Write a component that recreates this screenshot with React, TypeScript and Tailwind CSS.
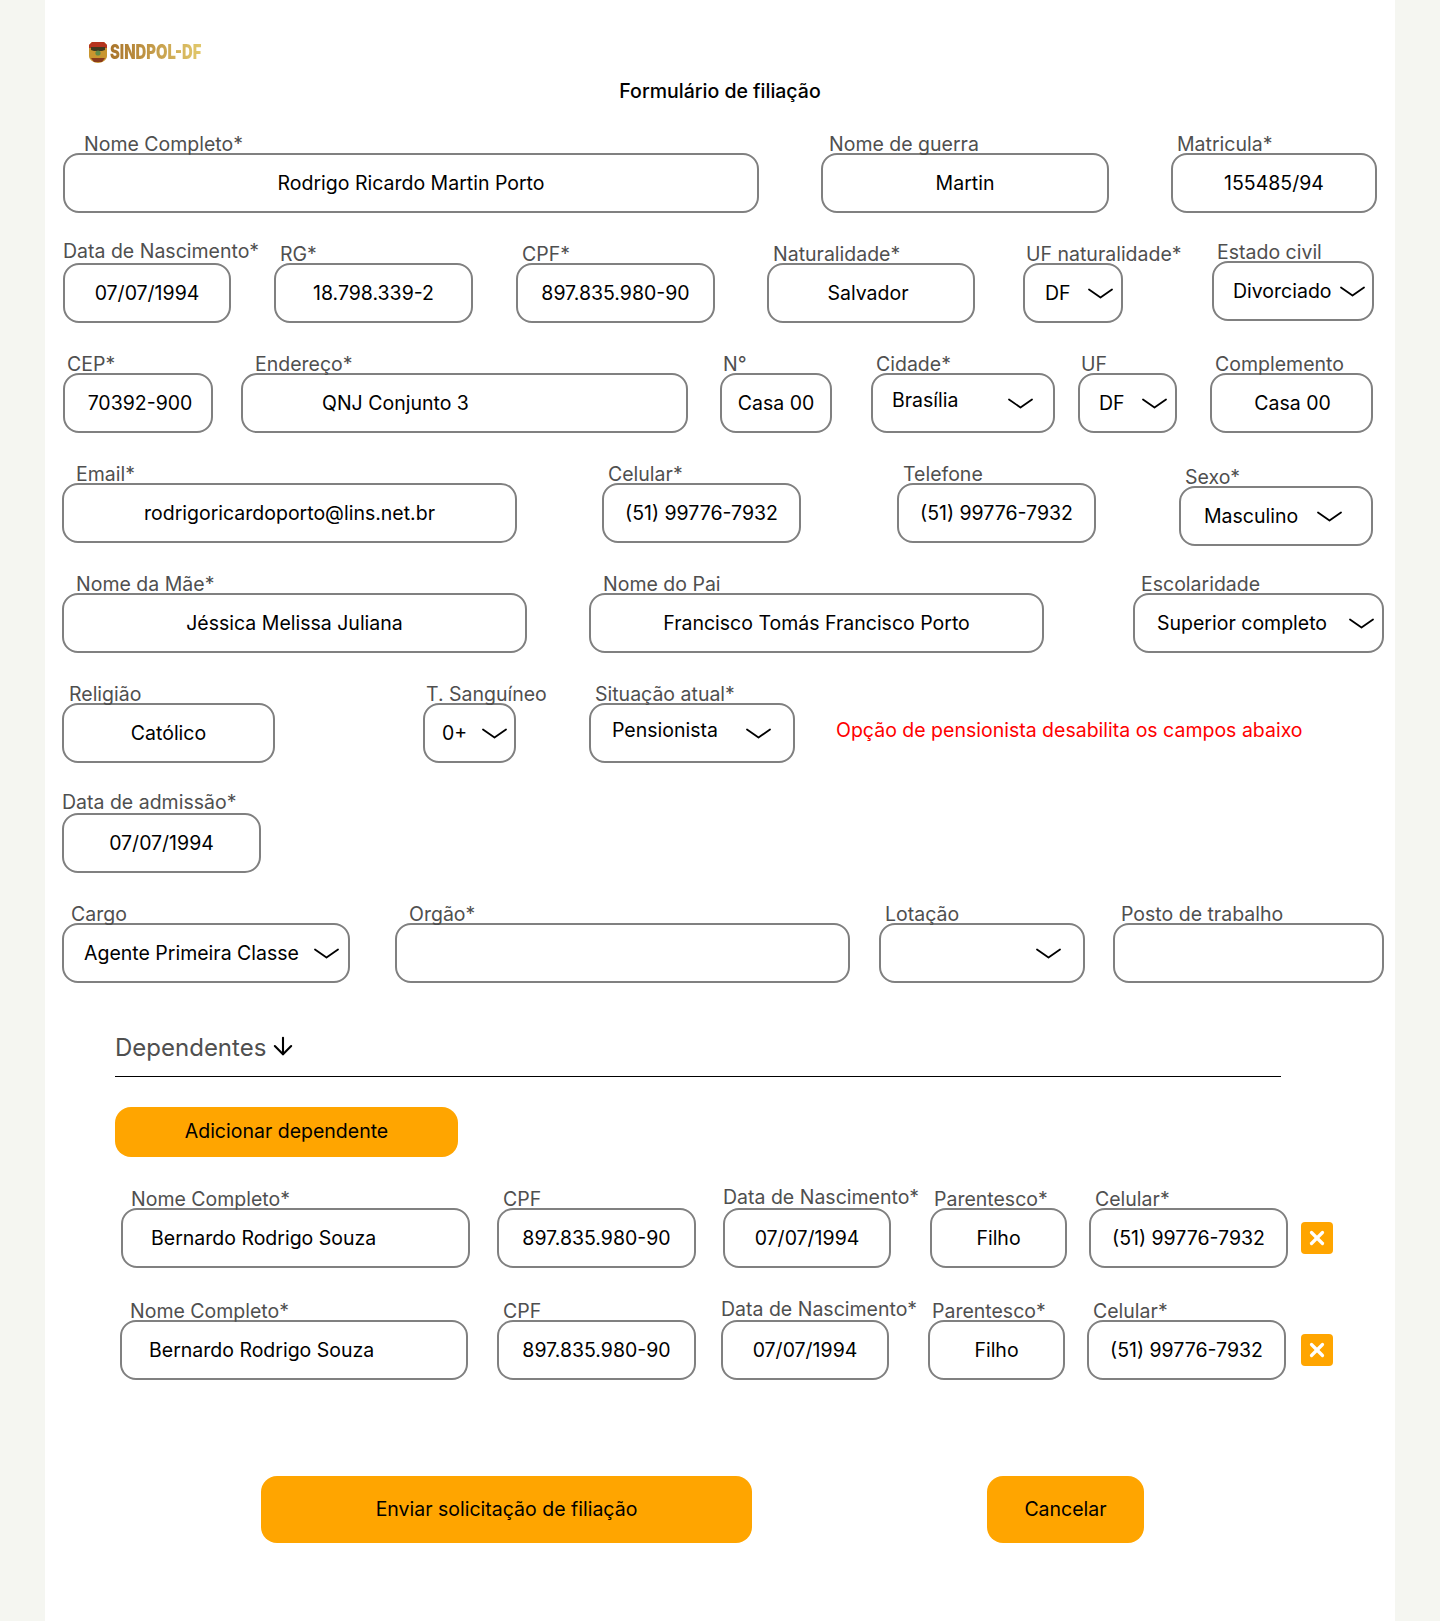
import { ArrowDown, X } from "lucide-react";

type FieldProps = {
  label: string;
  value?: string;
  className: string;
  labelClass?: string;
  valueClass?: string;
  chevronClass?: string;
};

const Chevron = ({ className = "" }: { className?: string }) => (
  <svg width="25" height="11" viewBox="0 0 25 11" fill="none" className={`shrink-0 ${className}`}>
    <path d="M1 1.5 12.5 9.5 24 1.5" stroke="#000" strokeWidth="1.8" strokeLinecap="round" strokeLinejoin="round" />
  </svg>
);

const Field = ({ label, value, className, labelClass = "", valueClass = "", chevronClass }: FieldProps) => (
  <div className={`shrink-0 ${className}`}>
    <label className={`block h-5 whitespace-nowrap text-[19.5px] leading-[22px] text-[#4f4f4f] ${labelClass}`}>{label}</label>
    <div
      className={`flex h-[60px] items-center rounded-2xl border-2 border-[#808080] ${
        chevronClass ? "justify-between" : "justify-center"
      }`}
    >
      {value && <span className={`whitespace-nowrap pt-[2px] ${valueClass}`}>{value}</span>}
      {chevronClass && <Chevron className={chevronClass} />}
    </div>
  </div>
);

const Logo = () => (
  <div className="ml-[43px] flex h-[23px] items-center">
    <svg width="20" height="23" viewBox="0 0 20 23" className="shrink-0">
      <path d="M1 4 4 1h12l3 3v11c0 4-5 7-9 7s-9-3-9-7Z" fill="#c9962f" />
      <path d="M1 4 4 1h12l3 3v3H1Z" fill="#b5341f" />
      <path d="M3 6h14v3l-3 1H6L3 9Z" fill="#3f3a20" />
      <circle cx="10" cy="12" r="2.6" fill="#5f8a48" />
      <path d="M3 17h14l-3 4H6Z" fill="#8a3a1c" />
    </svg>
    <span className="ml-[2px] origin-left scale-x-[0.74] whitespace-nowrap bg-gradient-to-r from-[#a9742a] to-[#e2c96c] bg-clip-text text-[20px] leading-[23px] font-black text-transparent">
      SINDPOL-DF
    </span>
  </div>
);

const dependents = [
  {
    first: "ml-[6px] w-[349px]",
    name: "pl-[10px]",
    nameValue: "mr-auto pl-[28px]",
    cpf: "ml-[27px]",
    birth: "ml-[27px]",
    kin: "ml-[39px]",
    phone: "ml-[22px]",
    remove: "ml-[13px]",
  },
  {
    first: "ml-[5px] w-[348px]",
    name: "pl-[10px]",
    nameValue: "mr-auto pl-[27px]",
    cpf: "ml-[29px]",
    birth: "ml-[25px]",
    kin: "ml-[39px]",
    phone: "ml-[22px]",
    remove: "ml-[15px]",
  },
];

export default function App() {
  return (
    <div className="min-h-screen bg-[#f5f6f1] font-['Inter',sans-serif] text-[19.5px] text-black">
      <main className="mx-[45px] h-[1621px] bg-white pt-[41px]">
        <Logo />
        <h1 className="mt-[15px] h-6 text-center text-[19.5px] leading-6 font-medium">Formulário de filiação</h1>

        <form className="mt-[30px] flex flex-col gap-[30px] pl-[17px]">
          <div className="flex items-start">
            <Field label="Nome Completo*" value="Rodrigo Ricardo Martin Porto" className="ml-[1px] w-[696px]" labelClass="pl-[21px]" />
            <Field label="Nome de guerra" value="Martin" className="ml-[62px] w-[288px]" labelClass="pl-[8px]" />
            <Field label="Matricula*" value="155485/94" className="ml-[62px] w-[206px]" labelClass="pl-[6px]" />
          </div>

          <div className="flex items-start">
            <Field label="Data de Nascimento*" value="07/07/1994" className="ml-[1px] w-[168px]" labelClass="-mt-[3px] mb-[3px]" />
            <Field label="RG*" value="18.798.339-2" className="ml-[43px] w-[199px]" labelClass="pl-[6px]" />
            <Field label="CPF*" value="897.835.980-90" className="ml-[43px] w-[199px]" labelClass="pl-[6px]" />
            <Field label="Naturalidade*" value="Salvador" className="ml-[52px] w-[208px]" labelClass="pl-[6px]" valueClass="pr-[6px]" />
            <Field label="UF naturalidade*" value="DF" className="ml-[48px] w-[100px]" labelClass="pl-[3px]" valueClass="pl-[20px]" chevronClass="mr-[8px]" />
            <Field label="Estado civil" value="Divorciado" className="-mt-[2px] ml-[89px] w-[162px]" labelClass="pl-[5px]" valueClass="pl-[19px]" chevronClass="mr-[7px]" />
          </div>

          <div className="flex items-start">
            <Field label="CEP*" value="70392-900" className="ml-[1px] w-[150px]" labelClass="pl-[4px]" valueClass="pl-[4px]" />
            <Field label="Endereço*" value="QNJ Conjunto 3" className="ml-[28px] w-[447px]" labelClass="pl-[14px]" valueClass="mr-auto pl-[79px]" />
            <Field label="N°" value="Casa 00" className="ml-[32px] w-[112px]" labelClass="pl-[3px]" />
            <Field label="Cidade*" value="Brasília" className="ml-[39px] w-[184px]" labelClass="pl-[5px]" valueClass="-mt-[7px] pl-[19px]" chevronClass="mr-[20px]" />
            <Field label="UF" value="DF" className="ml-[23px] w-[99px]" labelClass="pl-[3px]" valueClass="pl-[19px]" chevronClass="mr-[8px]" />
            <Field label="Complemento" value="Casa 00" className="ml-[33px] w-[163px]" labelClass="pl-[5px]" valueClass="pl-[2px]" />
          </div>

          <div className="flex items-start">
            <Field label="Email*" value="rodrigoricardoporto@lins.net.br" className="w-[455px]" labelClass="pl-[14px]" />
            <Field label="Celular*" value="(51) 99776-7932" className="ml-[85px] w-[199px]" labelClass="pl-[6px]" />
            <Field label="Telefone" value="(51) 99776-7932" className="ml-[96px] w-[199px]" labelClass="pl-[6px]" />
            <Field label="Sexo*" value="Masculino" className="mt-[3px] -mb-[3px] ml-[83px] w-[194px]" labelClass="pl-[6px]" valueClass="pl-[23px]" chevronClass="mr-[29px]" />
          </div>

          <div className="flex items-start">
            <Field label="Nome da Mãe*" value="Jéssica Melissa Juliana" className="w-[465px]" labelClass="pl-[14px]" />
            <Field label="Nome do Pai" value="Francisco Tomás Francisco Porto" className="ml-[62px] w-[455px]" labelClass="pl-[14px]" />
            <Field label="Escolaridade" value="Superior completo" className="ml-[89px] w-[251px]" labelClass="pl-[8px]" valueClass="pl-[22px]" chevronClass="mr-[8px]" />
          </div>

          <div className="flex items-start">
            <Field label="Religião" value="Católico" className="w-[213px]" labelClass="pl-[7px]" />
            <Field label="T. Sanguíneo" value="0+" className="ml-[148px] w-[93px]" labelClass="pl-[3px]" valueClass="pl-[17px]" chevronClass="mr-[7px]" />
            <Field label="Situação atual*" value="Pensionista" className="ml-[73px] w-[206px]" labelClass="pl-[6px]" valueClass="-mt-[7px] pl-[21px]" chevronClass="mr-[22px]" />
            <p className="mt-[35px] ml-[41px] whitespace-nowrap leading-6 text-[#ff0000]">Opção de pensionista desabilita os campos abaixo</p>
          </div>

          <div className="flex items-start">
            <Field label="Data de admissão*" value="07/07/1994" className="w-[199px]" labelClass="-mt-[2px] mb-[2px]" />
          </div>

          <div className="flex items-start">
            <Field label="Cargo" value="Agente Primeira Classe" className="w-[288px]" labelClass="pl-[9px]" valueClass="pl-[20px]" chevronClass="mr-[9px]" />
            <Field label="Orgão*" className="ml-[45px] w-[455px]" labelClass="pl-[14px]" />
            <Field label="Lotação" className="ml-[29px] w-[206px]" labelClass="pl-[6px]" chevronClass="mr-[22px] ml-auto" />
            <Field label="Posto de trabalho" className="ml-[28px] w-[271px]" labelClass="pl-[8px]" />
          </div>
        </form>

        <section className="mt-[49px] ml-[70px]">
          <div className="flex h-[45px] w-[1166px] items-start border-b border-black pb-3">
            <h2 className="text-[24px] leading-8 text-[#4f4f4f]">Dependentes</h2>
            <ArrowDown size={28} strokeWidth={1.8} className="ml-[3px] text-black" />
          </div>

          <button type="button" className="mt-[30px] block h-[50px] w-[343px] rounded-2xl bg-[#ffa500]">
            Adicionar dependente
          </button>

          <div className="mt-[31px] flex flex-col gap-[32px]">
            {dependents.map((dep, i) => (
              <div key={i} className="flex items-start">
                <Field label="Nome Completo*" value="Bernardo Rodrigo Souza" className={dep.first} labelClass={dep.name} valueClass={dep.nameValue} />
                <Field label="CPF" value="897.835.980-90" className={`w-[199px] ${dep.cpf}`} labelClass="pl-[6px]" />
                <Field label="Data de Nascimento*" value="07/07/1994" className={`w-[168px] ${dep.birth}`} labelClass="-mt-[2px] mb-[2px]" />
                <Field label="Parentesco*" value="Filho" className={`w-[137px] ${dep.kin}`} labelClass="pl-[4px]" />
                <Field label="Celular*" value="(51) 99776-7932" className={`w-[199px] ${dep.phone}`} labelClass="pl-[6px]" />
                <button type="button" aria-label="Remover" className={`mt-[34px] flex h-8 w-8 shrink-0 items-center justify-center rounded bg-[#ffa500] ${dep.remove}`}>
                  <X size={22} strokeWidth={3.5} className="text-white" />
                </button>
              </div>
            ))}
          </div>
        </section>

        <div className="mt-[96px] ml-[216px] flex">
          <button type="button" className="h-[67px] w-[491px] rounded-2xl bg-[#ffa500]">
            Enviar solicitação de filiação
          </button>
          <button type="button" className="ml-[235px] h-[67px] w-[157px] rounded-2xl bg-[#ffa500]">
            Cancelar
          </button>
        </div>
      </main>
    </div>
  );
}
